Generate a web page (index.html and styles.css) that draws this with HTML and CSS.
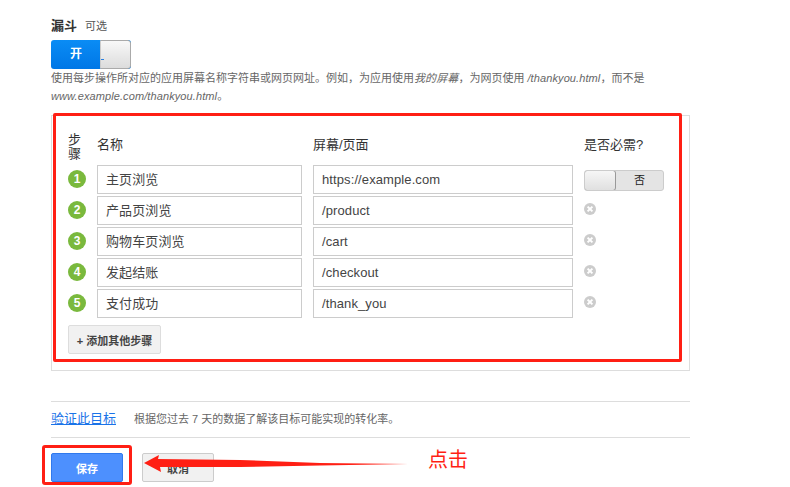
FILE: index.html
```html
<!DOCTYPE html>
<html lang="zh-CN">
<head>
    <meta charset="UTF-8">
    <title>漏斗</title>
    <link rel="stylesheet" href="styles.css">
</head>
<body>
    <div class="page">
        <div class="title-row">
            <span class="title">漏斗</span>
            <span class="optional">可选</span>
        </div>
        <div class="switch switch-on">
            <span class="switch-label">开</span>
            <span class="switch-knob"></span>
        </div>
        <p class="help">使用每步操作所对应的应用屏幕名称字符串或网页网址。例如，为应用使用<em>我的屏幕</em>，为网页使用 <em>/thankyou.html</em>，而不是<br><em>www.example.com/thankyou.html</em>。</p>

        <div class="panel">
            <div class="steps">
                <div class="head head-step">步骤</div>
                <div class="head">名称</div>
                <div class="head">屏幕/页面</div>
                <div class="head">是否必需?</div>

                <span class="num">1</span>
                <div class="field">主页浏览</div>
                <div class="field">https://example.com</div>
                <div class="switch switch-off">
                    <span class="switch-knob"></span>
                    <span class="switch-label">否</span>
                </div>

                <span class="num">2</span>
                <div class="field">产品页浏览</div>
                <div class="field">/product</div>
                <svg class="remove" viewBox="0 0 12 12"><circle cx="6" cy="6" r="6" fill="#ccc"/><path d="M3.6 3.6l4.8 4.8M8.4 3.6l-4.8 4.8" stroke="#fff" stroke-width="2"/></svg>

                <span class="num">3</span>
                <div class="field">购物车页浏览</div>
                <div class="field">/cart</div>
                <svg class="remove" viewBox="0 0 12 12"><circle cx="6" cy="6" r="6" fill="#ccc"/><path d="M3.6 3.6l4.8 4.8M8.4 3.6l-4.8 4.8" stroke="#fff" stroke-width="2"/></svg>

                <span class="num">4</span>
                <div class="field">发起结账</div>
                <div class="field">/checkout</div>
                <svg class="remove" viewBox="0 0 12 12"><circle cx="6" cy="6" r="6" fill="#ccc"/><path d="M3.6 3.6l4.8 4.8M8.4 3.6l-4.8 4.8" stroke="#fff" stroke-width="2"/></svg>

                <span class="num">5</span>
                <div class="field">支付成功</div>
                <div class="field">/thank_you</div>
                <svg class="remove" viewBox="0 0 12 12"><circle cx="6" cy="6" r="6" fill="#ccc"/><path d="M3.6 3.6l4.8 4.8M8.4 3.6l-4.8 4.8" stroke="#fff" stroke-width="2"/></svg>
            </div>
            <button class="btn btn-add">+ 添加其他步骤</button>
        </div>

        <div class="verify">
            <a class="verify-link" href="#">验证此目标</a>
            <span class="verify-text">根据您过去 7 天的数据了解该目标可能实现的转化率。</span>
        </div>

        <div class="actions">
            <button class="btn btn-save">保存</button>
            <button class="btn btn-cancel">取消</button>
        </div>
    </div>

    <!-- red annotations drawn over the screenshot -->
    <div class="mark mark-steps"></div>
    <div class="mark mark-save"></div>
    <svg class="arrow" viewBox="0 0 790 487"><path d="M144 463L159 455L158 459L240 460L320 463L408 464L320 465.5L240 467L160 467L161 472Z" fill="#ff1f14"/></svg>
    <span class="click-note">点击</span>
</body>
</html>
```

FILE: styles.css
```css
body {
    margin: 0;
    background: #fff;
    color: #444;
    font-family: "Liberation Sans", "Noto Sans CJK SC", sans-serif;
    font-size: 13px;
}
.page {
    position: relative;
    width: 639px;
    height: 487px;
    margin-left: 51px;
    padding-top: 17px;
    box-sizing: border-box;
    overflow: hidden;
}
.title-row {
    display: flex;
    align-items: baseline;
    gap: 8px;
    height: 23px;
    line-height: 18px;
}
.title {
    font-weight: bold;
    font-size: 13px;
    color: #333;
}
.optional {
    font-size: 11px;
    color: #555;
}

/* Toggles */
.switch {
    display: flex;
    box-sizing: border-box;
    border-radius: 3px;
    overflow: hidden;
    width: 80px;
}
.switch-on {
    height: 29px;
    background: linear-gradient(#0a8cf5, #0077e6);
}
.switch-on .switch-label {
    width: 49px;
    padding-left: 1px;
    box-sizing: border-box;
    color: #fff;
    font-weight: bold;
    font-size: 12px;
    line-height: 29px;
    text-align: center;
}
.switch-knob {
    position: relative;
    box-sizing: border-box;
    width: 31px;
    background: linear-gradient(#f8f8f8, #dcdcdc);
    border: 1px solid #aaa;
    border-left-color: #ccc;
    border-radius: 0 3px 3px 0;
}
.switch-knob::after {
    content: "";
    position: absolute;
    left: 0;
    bottom: 8px;
    width: 3px;
    height: 1px;
    background: #2a7fe0;
}
.switch-off {
    height: 21px;
    margin-top: 5px;
    background: #e4e4e4;
    border: 1px solid #ccc;
}
.switch-off .switch-knob {
    border-radius: 3px;
    border-color: #999;
    margin: -1px 0 -1px -1px;
    width: 32px;
    background: linear-gradient(#f6f6f6, #e0e0e0);
}
.switch-off .switch-knob::after {
    left: -1px;
    bottom: -1px;
    width: 4px;
}
.switch-off .switch-label {
    flex: 1;
    font-size: 11px;
    line-height: 19px;
    text-align: center;
    color: #222;
}

.help {
    margin: 0;
    height: 46px;
    font-size: 11px;
    line-height: 18px;
    color: #666;
}
.help em {
    letter-spacing: 0.1px;
}

/* Steps panel */
.panel {
    box-sizing: border-box;
    height: 256px;
    padding: 15px 16px 0;
    border: 1px solid #ddd;
}
.steps {
    display: grid;
    grid-template-columns: 18px 205px 260px 80px;
    grid-template-rows: 32px repeat(5, 29px);
    gap: 2px 11px;
}
.head {
    font-size: 13px;
    line-height: 28px;
    color: #333;
}
.head-step {
    line-height: 14px;
    margin-top: 2px;
}
.num {
    width: 18px;
    height: 18px;
    margin-top: 5px;
    border-radius: 50%;
    background: #7ab93d;
    color: #fff;
    font-weight: bold;
    font-size: 12px;
    line-height: 18px;
    text-align: center;
}
.field {
    box-sizing: border-box;
    height: 29px;
    padding-left: 8px;
    border: 1px solid #ccc;
    line-height: 27px;
    font-size: 13px;
    letter-spacing: 0.1px;
    color: #444;
}
.remove {
    width: 12px;
    height: 12px;
    margin-top: 7px;
}

/* Buttons */
.btn {
    box-sizing: border-box;
    height: 29px;
    border-radius: 2px;
    font-family: inherit;
    font-weight: bold;
    font-size: 11px;
    padding: 0;
}
.btn-add {
    display: block;
    width: 93px;
    margin-top: 7px;
    background: #f1f1f1;
    border: 1px solid #ddd;
    color: #444;
}
.verify {
    display: flex;
    align-items: center;
    gap: 18px;
    box-sizing: border-box;
    height: 37px;
    margin-top: 30px;
    padding-bottom: 4px;
    border-top: 1px solid #ddd;
    border-bottom: 1px solid #ddd;
}
.verify-link {
    color: #1a73e8;
    font-size: 13px;
}
.verify-text {
    font-size: 11px;
    color: #666;
}
.actions {
    display: flex;
    gap: 19px;
    margin-top: 15px;
}
.btn-save {
    width: 72px;
    background: #4d90fe;
    border: 1px solid #3079ed;
    color: #fff;
}
.btn-cancel {
    width: 72px;
    background: #f1f1f1;
    border: 1px solid #ccc;
    color: #444;
}

/* Annotations */
.mark {
    position: absolute;
    box-sizing: border-box;
    border: 3px solid #ff1f14;
    border-radius: 2px;
}
.mark-steps {
    left: 53px;
    top: 113px;
    width: 629px;
    height: 249px;
}
.mark-save {
    left: 42px;
    top: 445px;
    width: 90px;
    height: 40px;
    border-radius: 3px;
}
.arrow {
    position: absolute;
    left: 0;
    top: 0;
    width: 790px;
    height: 487px;
}
.click-note {
    position: absolute;
    left: 428px;
    top: 445px;
    font-size: 20px;
    line-height: 30px;
    color: #ff1f14;
}
```
